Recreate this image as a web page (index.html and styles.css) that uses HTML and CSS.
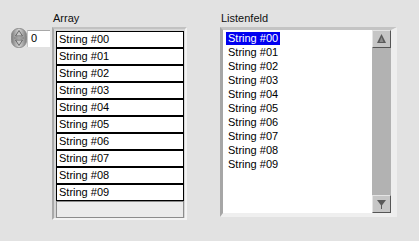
FILE: index.html
```html
<!DOCTYPE html>
<html lang="de">
<head>
  <meta charset="UTF-8" />
  <title>Array und Listenfeld</title>
  <link rel="stylesheet" href="styles.css">
</head>
<body>

<div class="panel">

  <!-- Array control -->
  <div class="array-group">
    <div class="label array-label">Array</div>
    <div class="array-row">
      <div class="index">
        <div class="spinner">
          <svg width="16" height="20" viewBox="0 0 16 20">
            <defs>
              <linearGradient id="spinGrad" x1="0" y1="0" x2="1" y2="0">
                <stop offset="0" stop-color="#7c7c7c"/>
                <stop offset="0.5" stop-color="#d8d8d8"/>
                <stop offset="1" stop-color="#7c7c7c"/>
              </linearGradient>
            </defs>
            <rect x="0.5" y="0.5" width="15" height="19" rx="7" fill="url(#spinGrad)" stroke="#8c8c8c"/>
            <line x1="3" y1="10" x2="13" y2="10" stroke="#7a7a7a"/>
            <path d="M8 2.5 L4.5 8 L11.5 8 Z" fill="#c8c8c8" stroke="#5e5e5e" stroke-width="0.9"/>
            <path d="M8 17.5 L4.5 12 L11.5 12 Z" fill="#c8c8c8" stroke="#5e5e5e" stroke-width="0.9"/>
          </svg>
        </div>
        <div class="index-value">0</div>
      </div>
      <div class="array-frame">
        <div class="element">String #00</div>
        <div class="element">String #01</div>
        <div class="element">String #02</div>
        <div class="element">String #03</div>
        <div class="element">String #04</div>
        <div class="element">String #05</div>
        <div class="element">String #06</div>
        <div class="element">String #07</div>
        <div class="element">String #08</div>
        <div class="element">String #09</div>
        <div class="element empty"></div>
      </div>
    </div>
  </div>

  <!-- Listbox control -->
  <div class="list-group">
    <div class="label list-label">Listenfeld</div>
    <div class="listbox">
      <div class="list-items">
        <div class="item"><span class="selected">String #00</span></div>
        <div class="item"><span>String #01</span></div>
        <div class="item"><span>String #02</span></div>
        <div class="item"><span>String #03</span></div>
        <div class="item"><span>String #04</span></div>
        <div class="item"><span>String #05</span></div>
        <div class="item"><span>String #06</span></div>
        <div class="item"><span>String #07</span></div>
        <div class="item"><span>String #08</span></div>
        <div class="item"><span>String #09</span></div>
      </div>
      <div class="scrollbar">
        <div class="scroll-btn">
          <svg width="17" height="16" viewBox="0 0 17 16">
            <path d="M8.5 3 L4 12 L13 12 Z" fill="#5a5a5a"/>
            <path d="M8.5 6 L6.5 11 L10.5 11 Z" fill="#8c8c8c"/>
          </svg>
        </div>
        <div class="scroll-track"></div>
        <div class="scroll-btn">
          <svg width="17" height="16" viewBox="0 0 17 16">
            <path d="M4 4 L13 4 L8.5 10 Z" fill="#5a5a5a"/>
            <rect x="8" y="9" width="1" height="4" fill="#5a5a5a"/>
          </svg>
        </div>
      </div>
    </div>
  </div>

</div>

</body>
</html>
```

FILE: styles.css
```css
* {
  box-sizing: border-box;
}

body {
  margin: 0;
  background-color: #e2e2e2;
  font-family: "Liberation Sans", Arial, sans-serif;
  font-size: 11px;
  color: #000;
}

.panel {
  display: flex;
  padding-top: 12px;
}

.label {
  height: 13px;
  line-height: 13px;
  color: #101010;
}

/* Array */

.array-group {
  margin-left: 11px;
}

.array-label {
  margin-left: 42px;
  margin-bottom: 2px;
}

.array-row {
  display: flex;
  align-items: flex-start;
}

.index {
  display: flex;
  margin-top: 1px;
  margin-right: 2px;
}

.spinner {
  width: 16px;
  height: 20px;
}

.spinner svg {
  display: block;
}

.index-value {
  width: 23px;
  height: 17px;
  margin-top: 2px;
  padding-left: 3px;
  line-height: 15px;
  background-color: #fff;
  border-top: 1px solid #a8a8a8;
  border-left: 1px solid #c8c8c8;
}

.array-frame {
  width: 135px;
  padding: 2px 1px 0 2px;
  border: 2px solid;
  border-color: #c2c2c2 #f3f3f3 #f3f3f3 #a9a9a9;
  background-color: #d6d6d6;
}

.element {
  height: 17px;
  padding-left: 2px;
  line-height: 15px;
  background-color: #fff;
  border: 1px solid #000;
  white-space: nowrap;
}

.element.empty {
  background-color: #ebebeb;
  border-color: #8c8c8c;
}

/* Listbox */

.list-group {
  margin-left: 33px;
}

.list-label {
  margin-left: 1px;
  margin-bottom: 2px;
}

.listbox {
  display: flex;
  width: 177px;
  height: 190px;
  border-style: solid;
  border-width: 3px 6px 4px 3px;
  border-color: #c4c4c4 #eeeeee #efefef #a6a6a6;
}

.list-items {
  width: 149px;
  padding-top: 1px;
  padding-left: 3px;
  background-color: #fff;
}

.item {
  height: 14px;
  line-height: 14px;
  white-space: nowrap;
}

.item span {
  padding: 0 2px;
}

.item .selected {
  background-color: #0000f0;
  color: #fff;
  padding-bottom: 1px;
}

.scrollbar {
  display: flex;
  flex-direction: column;
  width: 19px;
  background-color: #b2b2b2;
}

.scroll-btn {
  height: 18px;
  background-color: #c6c6c6;
  border-style: solid;
  border-width: 1px;
  border-color: #e4e4e4 #555 #555 #e4e4e4;
}

.scroll-btn svg {
  display: block;
}

.scroll-track {
  flex: 1;
}
```
